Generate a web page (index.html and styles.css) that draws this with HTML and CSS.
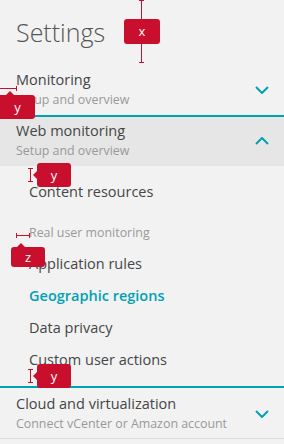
FILE: index.html
```html
<!DOCTYPE html>
<html>
<head>
<meta charset="utf-8">
<link rel="stylesheet" href="styles.css">
</head>
<body>
<div class="panel">
  <header class="page-head"><h1 class="page-title">Settings</h1></header>

  <div class="group">
    <div class="group-text">
      <div class="group-title">Monitoring</div>
      <div class="group-sub">Setup and overview</div>
    </div>
    <svg class="chev" width="14" height="8" viewBox="0 0 14 8"><path d="M1 1 L7 7 L13 1" fill="none" stroke="#00a1b2" stroke-width="2"/></svg>
  </div>

  <div class="group group-open">
    <div class="group-text">
      <div class="group-title">Web monitoring</div>
      <div class="group-sub">Setup and overview</div>
    </div>
    <svg class="chev" width="14" height="8" viewBox="0 0 14 8"><path d="M1 7 L7 1 L13 7" fill="none" stroke="#00a1b2" stroke-width="2"/></svg>
  </div>

  <ul class="sublist">
    <li class="item">Content resources</li>
    <li class="label">Real user monitoring</li>
    <li class="item">Application rules</li>
    <li class="item item-active">Geographic regions</li>
    <li class="item">Data privacy</li>
    <li class="item">Custom user actions</li>
  </ul>

  <div class="group group-last">
    <div class="group-text">
      <div class="group-title">Cloud and virtualization</div>
      <div class="group-sub">Connect vCenter or Amazon account</div>
    </div>
    <svg class="chev" width="14" height="8" viewBox="0 0 14 8"><path d="M1 1 L7 7 L13 1" fill="none" stroke="#00a1b2" stroke-width="2"/></svg>
  </div>
</div>

<!-- spec annotations -->
<div class="dim dim-v dim-x"></div>
<div class="tag tag-x">x</div>

<div class="dim dim-h dim-y1"></div>
<div class="tag tag-up tag-y1">y</div>

<div class="dim dim-v dim-y2"></div>
<div class="tag tag-left tag-y2">y</div>

<div class="dim dim-h dim-z"></div>
<div class="tag tag-up tag-z">z</div>

<div class="dim dim-v dim-y3"></div>
<div class="tag tag-left tag-y3">y</div>
</body>
</html>
```

FILE: styles.css
```css
html, body {
  margin: 0;
  padding: 0;
}
body {
  background: #f2f2f2;
  font-family: "Open Sans", "Noto Sans", sans-serif;
  color: #454646;
  width: 284px;
  height: 444px;
  overflow: hidden;
  position: relative;
}
.panel {
  display: flex;
  flex-direction: column;
}
.page-head {
  height: 66px;
  padding-left: 16px;
}
.page-title {
  margin: 0;
  font-weight: 300;
  font-size: 25px;
  line-height: 64px;
  color: #555;
}
.group {
  display: flex;
  align-items: center;
  justify-content: space-between;
  padding: 4px 13px 6px 16px;
  border-bottom: 2px solid #00a1b2;
}
.group-open {
  background: #e6e6e6;
  border-bottom: none;
}
.group-last {
  padding-top: 6px;
  padding-bottom: 5px;
  border-bottom: 1px solid #dcdcdc;
}
.group-text {
  display: flex;
  flex-direction: column;
  gap: 1px;
}
.group-title {
  font-size: 14.5px;
  line-height: 20px;
  color: #454646;
}
.group-sub {
  font-size: 12.4px;
  line-height: 18px;
  color: #999;
}
.chev {
  display: block;
  margin-right: 2px;
}
.sublist {
  list-style: none;
  margin: 0;
  padding: 16px 0 16px 29px;
  display: flex;
  flex-direction: column;
  gap: 12px;
  border-bottom: 2px solid #00a1b2;
}
.item {
  font-size: 14.5px;
  line-height: 20px;
  color: #454646;
}
.item-active {
  color: #00a1b2;
  font-weight: 600;
}
.label {
  font-size: 12.4px;
  line-height: 18px;
  color: #999;
  margin-top: 10px;
}

/* annotations */
.dim {
  position: absolute;
  background: #c8102e;
}
.dim::before, .dim::after {
  content: "";
  position: absolute;
  background: #c8102e;
}
.dim-v { width: 1px; }
.dim-v::before, .dim-v::after { left: -2px; width: 5px; height: 1px; }
.dim-v::before { top: 0; }
.dim-v::after { bottom: 0; }
.dim-h { height: 1px; }
.dim-h::before, .dim-h::after { top: -2px; width: 1px; height: 5px; }
.dim-h::before { left: 0; }
.dim-h::after { right: 0; }

.dim-x { left: 141px; top: 0; height: 63px; }
.dim-y1 { left: -1px; top: 88px; width: 18px; }
.dim-y2 { left: 30px; top: 168px; height: 14px; }
.dim-z { left: 16px; top: 235px; width: 14px; }
.dim-y3 { left: 30px; top: 369px; height: 14px; }

.tag {
  position: absolute;
  background: #c8102e;
  color: #fff;
  font-family: "Open Sans", sans-serif;
  font-size: 13px;
  line-height: 24px;
  height: 24px;
  width: 34px;
  text-align: center;
  border-radius: 3px;
}
.tag-up::before {
  content: "";
  position: absolute;
  top: -4px;
  left: 6px;
  border-left: 4px solid transparent;
  border-right: 4px solid transparent;
  border-bottom: 4px solid #c8102e;
}
.tag-left::before {
  content: "";
  position: absolute;
  left: -4px;
  top: 8px;
  border-top: 4px solid transparent;
  border-bottom: 4px solid transparent;
  border-right: 4px solid #c8102e;
}
.tag-x { left: 124px; top: 19px; width: 36px; height: 25px; line-height: 25px; }
.tag-y1 { left: 0; top: 95px; width: 35px; border-top-left-radius: 0; border-bottom-left-radius: 0; }
.tag-y2 { left: 37px; top: 163px; }
.tag-z { left: 11px; top: 247px; height: 20px; line-height: 20px; }
.tag-y3 { left: 37px; top: 364px; }
```
